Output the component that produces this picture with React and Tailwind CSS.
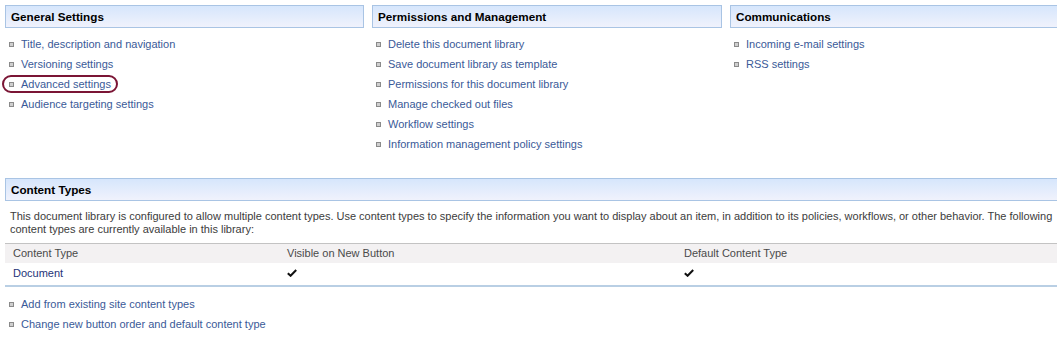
import React from "react";

const Bullet = () => (
  <span className="inline-block w-[5px] h-[5px] border border-[#8a8a8a] bg-[#cfcfcf] shrink-0" />
);

const LinkItem = ({ children, bulletPad = "pl-[4px]" }) => (
  <div className={`h-[20px] flex items-center ${bulletPad}`}>
    <Bullet />
    <span className="ml-[7px] text-[#3a5a98] whitespace-nowrap">{children}</span>
  </div>
);

const Header = ({ children, className = "" }) => (
  <div
    className={`h-[23px] flex items-center pl-[5px] border-y border-[#a9c4e4] bg-gradient-to-b from-[#d6e6fc] to-[#f0f2fc] font-bold text-[11.7px] text-black ${className}`}
  >
    {children}
  </div>
);

const Check = () => (
  <svg width="10" height="8" viewBox="0 0 10 8" className="block">
    <path d="M0.8 4.2 L3.6 6.8 L9.2 1" stroke="#111" strokeWidth="2" fill="none" />
  </svg>
);

export default function App() {
  const general = [
    "Title, description and navigation",
    "Versioning settings",
    "Advanced settings",
    "Audience targeting settings",
  ];
  const perms = [
    "Delete this document library",
    "Save document library as template",
    "Permissions for this document library",
    "Manage checked out files",
    "Workflow settings",
    "Information management policy settings",
  ];
  const comms = ["Incoming e-mail settings", "RSS settings"];

  return (
    <div className="relative w-[1057px] h-[350px] overflow-hidden bg-white text-[11px] font-['Liberation_Sans',Arial,sans-serif] leading-none">
      <div className="flex pt-[5px] pl-[5px] gap-[8px]">
        <div className="w-[359px] shrink-0">
          <Header className="border-x">General Settings</Header>
          <div className="mt-[6px]">
            {general.map((t) => (
              <LinkItem key={t}>{t}</LinkItem>
            ))}
          </div>
        </div>
        <div className="w-[350px] shrink-0">
          <Header className="border-x">Permissions and Management</Header>
          <div className="mt-[6px]">
            {perms.map((t) => (
              <LinkItem key={t} bulletPad="pl-[4px]">{t}</LinkItem>
            ))}
          </div>
        </div>
        <div className="w-[340px] shrink-0">
          <Header className="border-l">Communications</Header>
          <div className="mt-[6px]">
            {comms.map((t) => (
              <LinkItem key={t} bulletPad="pl-[4px]">{t}</LinkItem>
            ))}
          </div>
        </div>
      </div>

      <div className="mt-[24px] ml-[5px] w-[1060px]">
        <Header className="border-l h-[22px]">Content Types</Header>
        <div className="mt-[9px] pl-[5px] leading-[13px] text-[#3c3c3c] whitespace-nowrap">
          This document library is configured to allow multiple content types. Use content types to specify the information you want to display about an item, in addition to its policies, workflows, or other behavior. The following
          <br />
          content types are currently available in this library:
        </div>
        <div className="mt-[7px] border-t border-[#c3c3c3] border-b-2 border-b-[#b9cfe4] w-[1052px]">
          <div className="h-[19px] flex items-center bg-[#f3f1f2] text-[#4a4a4a]">
            <div className="w-[282px] pl-[8px]">Content Type</div>
            <div className="w-[397px]">Visible on New Button</div>
            <div>Default Content Type</div>
          </div>
          <div className="h-[22px] flex items-center pb-[2px]">
            <div className="w-[282px] pl-[8px] text-[#1e3378]">Document</div>
            <div className="w-[397px]"><Check /></div>
            <div><Check /></div>
          </div>
        </div>
        <div className="mt-[7px]">
          <LinkItem>Add from existing site content types</LinkItem>
          <LinkItem>Change new button order and default content type</LinkItem>
        </div>
      </div>

      <div className="absolute left-[2px] top-[75px] w-[116px] h-[18px] border-2 border-[#7b1535] rounded-[9px]" />
    </div>
  );
}
